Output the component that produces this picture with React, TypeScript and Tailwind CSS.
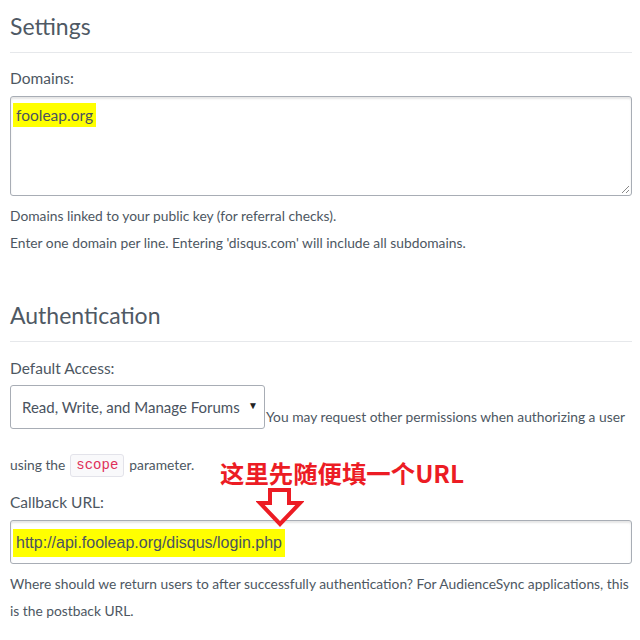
import React from "react";

const font = { fontFamily: "Lato, 'Noto Sans', sans-serif" };

export default function App() {
  return (
    <div className="w-[640px] h-[640px] bg-white text-[#4d5762] pl-[10px] pr-[8px] overflow-hidden" style={font}>
      <div className="mt-[11px] pb-[11px] border-b border-[#e6e8eb]">
        <h2 className="text-[23px] leading-[30px] font-normal text-[#4f5964]">Settings</h2>
      </div>
      <div className="mt-[15px] text-[15.5px] leading-[20px]">Domains:</div>
      <div className="relative mt-[8px] h-[100px] border border-[#a8adb5] rounded-[3px] shadow-[inset_0_2px_2px_rgba(0,0,0,0.1)] pt-[6px] pl-[2px]">
        <span className="inline-block bg-[#ffff00] px-[3px] text-[15.5px] leading-[24px] text-[#4a5360]">fooleap.org</span>
        <svg className="absolute right-[1px] bottom-[1px]" width="9" height="9" viewBox="0 0 9 9">
          <line x1="8" y1="1" x2="1" y2="8" stroke="#888" strokeWidth="1" />
          <line x1="8" y1="5" x2="5" y2="8" stroke="#888" strokeWidth="1" />
        </svg>
      </div>
      <div className="mt-[6px] text-[13.8px] leading-[27px]">Domains linked to your public key (for referral checks).</div>
      <div className="text-[13.8px] leading-[27px]">Enter one domain per line. Entering 'disqus.com' will include all subdomains.</div>

      <div className="mt-[44px] pb-[11px] border-b border-[#e6e8eb]">
        <h2 className="text-[23px] leading-[30px] font-normal text-[#4f5964]">Authentication</h2>
      </div>
      <div className="mt-[16px] text-[15.5px] leading-[20px]">Default Access:</div>
      <div className="mt-[7px] flex items-end">
        <div className="w-[255px] h-[44px] border border-[#a8adb5] rounded-[3px] flex items-center pl-[11px] pr-[6px] justify-between shrink-0">
          <span className="text-[15px] text-[#4a5360] whitespace-nowrap">Read, Write, and Manage Forums</span>
          <span className="text-[10px] text-[#222] mb-[4px]">▼</span>
        </div>
        <span className="text-[13.8px] leading-[16px] whitespace-nowrap mb-[4px] ml-[1px]">You may request other permissions when authorizing a user</span>
      </div>
      <div className="relative mt-[25px] flex items-center text-[13.8px] h-[23px]">
        <span>using the</span>
        <code className="mx-[5px] px-[5px] h-[23px] flex items-center bg-[#f9f9fb] border border-[#e3e3ea] rounded-[3px] text-[#e0305a] text-[14px]" style={{ fontFamily: "'Liberation Mono', monospace" }}>scope</code>
        <span>parameter.</span>
        <span
          className="absolute left-[210px] top-[4px] text-[24.4px] leading-[30px] font-bold text-[#ec1c24] whitespace-nowrap"
          style={{ fontFamily: "'Noto Sans CJK SC', 'Noto Sans', sans-serif" }}
        >
          这里先随便填一个URL
        </span>
      </div>
      <div className="relative mt-[15px] text-[15.5px] leading-[20px]">
        Callback URL:
        <svg className="absolute left-[246px] top-[-4px] z-10" width="48" height="42" viewBox="0 0 48 42">
          <polygon points="14,2 33,2 33,15 44,15 24,36 4,15 14,15" fill="white" stroke="#ec1c24" strokeWidth="4" strokeLinejoin="miter" />
        </svg>
      </div>
      <div className="mt-[8px] h-[44px] border border-[#a8adb5] rounded-[3px] shadow-[inset_0_2px_2px_rgba(0,0,0,0.1)] flex items-center pl-[2px]">
        <span
          className="inline-block bg-[#ffff00] px-[3px] text-[16px] leading-[28px] text-[#4a5360] mt-[1px]"
          style={{ fontFamily: "'Liberation Sans', Arial, sans-serif" }}
        >
          http://api.fooleap.org/disqus/login.php
        </span>
      </div>
      <div className="mt-[6px] text-[13.8px] leading-[27px] whitespace-nowrap">
        Where should we return users to after successfully authentication? For AudienceSync applications, this
      </div>
      <div className="text-[13.8px] leading-[27px]">is the postback URL.</div>
    </div>
  );
}
